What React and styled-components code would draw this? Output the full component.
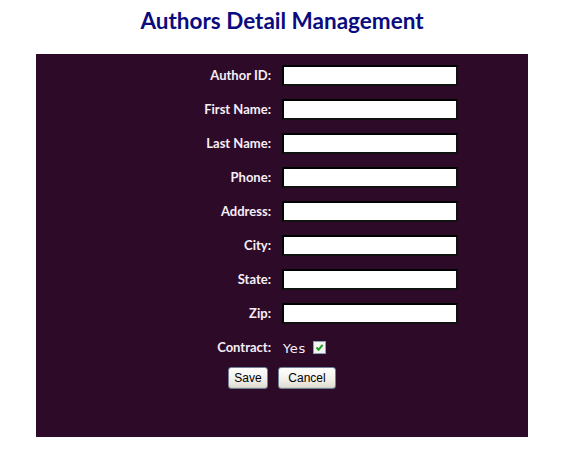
import React from 'react';
import styled, { createGlobalStyle } from 'styled-components';

const fields = ['Author ID', 'First Name', 'Last Name', 'Phone', 'Address', 'City', 'State', 'Zip'];

const panelbg = '#2d0b28',
    labelcolor = '#f6eef6',
    titlecolor = '#0b0b80';

export default function App() {
    return (
        <>
            <GlobalStyle />
            <Page>
                <Title>Authors Detail Management</Title>
                <Panel>
                    <FormGrid>
                        {fields.map(f => (
                            <React.Fragment key={f}>
                                <Label>{f}:</Label>
                                <Cell><TextBox type="text" /></Cell>
                            </React.Fragment>
                        ))}
                        <Label>Contract:</Label>
                        <Cell>
                            <YesText>Yes</YesText>
                            <CheckBox>
                                <svg width="9" height="9" viewBox="0 0 9 9">
                                    <path d="M1.5 4.5 L3.6 6.7 L7.6 1.8" fill="none" stroke="#21a121" strokeWidth="2" />
                                </svg>
                            </CheckBox>
                        </Cell>
                    </FormGrid>
                    <Buttons>
                        <Button $w={40}>Save</Button>
                        <Button $w={58}>Cancel</Button>
                    </Buttons>
                </Panel>
            </Page>
        </>
    );
}

const GlobalStyle = createGlobalStyle`
    body {
        margin: 0;
        background: #fff;
    }
`;

const Page = styled.div`
    width: 575px;
    height: 454px;
    padding: 8px 0 0 36px;
    box-sizing: border-box;
`;

const Title = styled.h1`
    margin: 0;
    width: 492px;
    text-align: center;
    font-family: Lato, "Open Sans", sans-serif;
    font-weight: 700;
    font-size: 22.5px;
    line-height: 26px;
    color: ${titlecolor};
`;

const Panel = styled.div`
    margin-top: 20px;
    width: 492px;
    height: 383px;
    background-color: ${panelbg};
    padding-top: 11px;
    box-sizing: border-box;
`;

const FormGrid = styled.div`
    display: grid;
    grid-template-columns: 246px 246px;
    grid-auto-rows: 21px;
    row-gap: 13px;
`;

const Label = styled.div`
    font-family: Lato, "Open Sans", sans-serif;
    font-weight: 700;
    font-size: 13px;
    color: ${labelcolor};
    text-align: right;
    padding-right: 11px;
    line-height: 21px;
`;

const Cell = styled.div`
    display: flex;
    align-items: center;
`;

const TextBox = styled.input`
    width: 176px;
    height: 21px;
    box-sizing: border-box;
    border: 2px solid #000;
    border-right-color: #111;
    border-bottom-color: #111;
    background: #fff;
    padding: 0 3px;
    margin: 0;
    outline: none;
`;

const YesText = styled.span`
    font-family: "DejaVu Sans", Verdana, sans-serif;
    font-size: 13px;
    color: ${labelcolor};
    letter-spacing: 0.6px;
    margin-left: 1px;
    margin-top: 1px;
`;

const CheckBox = styled.span`
    display: inline-flex;
    align-items: center;
    justify-content: center;
    width: 11px;
    height: 11px;
    margin-left: 7px;
    background: #f4f4f4;
    border: 1px solid #8aa0b8;
`;

const Buttons = styled.div`
    display: flex;
    justify-content: center;
    gap: 10px;
    margin-top: 9px;
`;

const Button = styled.button`
    width: ${p => p.$w}px;
    height: 22px;
    padding: 0;
    font-family: "Liberation Sans", Arial, sans-serif;
    font-size: 12px;
    color: #000;
    background: linear-gradient(#ffffff, #f1efe8 60%, #dedbd0);
    border: 1px solid #6f7f96;
    border-radius: 3px;
    box-shadow: inset 0 -1px 0 #d0cdc2;
`;
